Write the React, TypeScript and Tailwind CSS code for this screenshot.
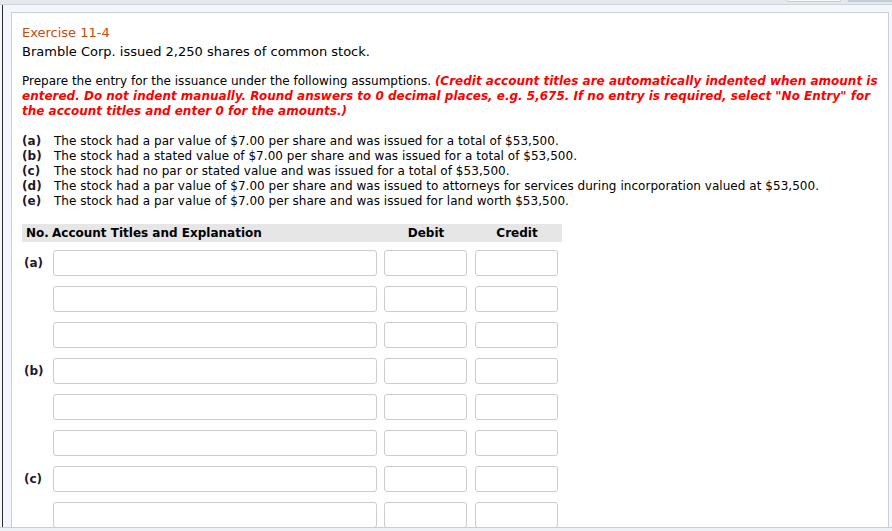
import React from "react";

const items = [
  ["(a)", "The stock had a par value of $7.00 per share and was issued for a total of $53,500."],
  ["(b)", "The stock had a stated value of $7.00 per share and was issued for a total of $53,500."],
  ["(c)", "The stock had no par or stated value and was issued for a total of $53,500."],
  ["(d)", "The stock had a par value of $7.00 per share and was issued to attorneys for services during incorporation valued at $53,500."],
  ["(e)", "The stock had a par value of $7.00 per share and was issued for land worth $53,500."],
];

const groups = ["(a)", "(b)", "(c)"];

function EntryRow({ label }: { label?: string }) {
  return (
    <div className="flex items-center h-[26px] mb-[10px]">
      <div className="w-[31px] pl-[2px] font-bold text-[#1a1a2e]">{label}</div>
      <input className="w-[324px] h-[26px] border border-[#cccccc] rounded-[3px] bg-white outline-none" />
      <input className="w-[83px] h-[26px] ml-[7px] border border-[#cccccc] rounded-[3px] bg-white outline-none" />
      <input className="w-[83px] h-[26px] ml-[8px] border border-[#cccccc] rounded-[3px] bg-white outline-none" />
    </div>
  );
}

export default function App() {
  return (
    <div
      className="w-[892px] h-[531px] overflow-hidden bg-[#f3f6fa] flex flex-col relative"
      style={{ fontFamily: '"DejaVu Sans", Verdana, sans-serif' }}
    >
      {/* top strip */}
      <div className="h-[5px] bg-[#e4e8ed] border-b border-[#cdd4dd] shrink-0" />
      <div className="absolute top-0 left-[787px] w-[54px] h-[2px] bg-[#f7f8fa] border border-t-0 border-[#c6ccd4] rounded-b-[3px]" />
      <div className="absolute top-0 left-[848px] w-[44px] h-[2px] bg-[#c3cdd6]" />

      <div className="flex flex-1 min-h-0">
        <div className="w-[2px] shrink-0" />
        <div className="w-px bg-[#2b2b2b] shrink-0" />
        <div className="flex-1 min-w-0 pl-[8px] pt-[7px] pr-[3px]">
          <div className="h-full bg-white border border-[#c6cfdb] border-b-0 pl-[10px] pt-[12px] text-[12px] text-black">
            <div className="text-[13px] leading-[16px] text-[#c94a10]">Exercise 11-4</div>
            <div className="text-[13px] leading-[16px] mt-[3px]">
              Bramble Corp. issued 2,250 shares of common stock.
            </div>

            <p className="mt-[14px] leading-[15px] whitespace-nowrap">
              Prepare the entry for the issuance under the following assumptions.{" "}
              <span className="text-[#ff0000] font-bold italic">
                (Credit account titles are automatically indented when amount is
                <br />
                entered. Do not indent manually. Round answers to 0 decimal places, e.g. 5,675. If
                no entry is required, select "No Entry" for
                <br />
                the account titles and enter 0 for the amounts.)
              </span>
            </p>

            <div className="mt-[15px] leading-[15px] tracking-[0.04px]">
              {items.map(([l, t]) => (
                <div key={l} className="flex">
                  <span className="w-[32px] shrink-0 font-bold text-[#1a1a2e]">{l}</span>
                  <span>{t}</span>
                </div>
              ))}
            </div>

            <div className="mt-[15px] w-[540px] h-[18px] bg-[#e6e6e6] flex items-center font-bold text-[12px]">
              <span className="w-[30px] pl-[4px]">No.</span>
              <span className="w-[331px]">Account Titles and Explanation</span>
              <span className="w-[83px] pl-[3px] text-center">Debit</span>
              <span className="w-[8px]" />
              <span className="w-[83px] pl-[3px] text-center">Credit</span>
            </div>

            <div className="mt-[8px]">
              {groups.map((g) => (
                <div key={g}>
                  <EntryRow label={g} />
                  <EntryRow />
                  <EntryRow />
                </div>
              ))}
            </div>
          </div>
        </div>
      </div>

      {/* bottom strip */}
      <div className="h-[4px] bg-[#eef2f7] border-t border-[#c7ced8] shrink-0" />
    </div>
  );
}
